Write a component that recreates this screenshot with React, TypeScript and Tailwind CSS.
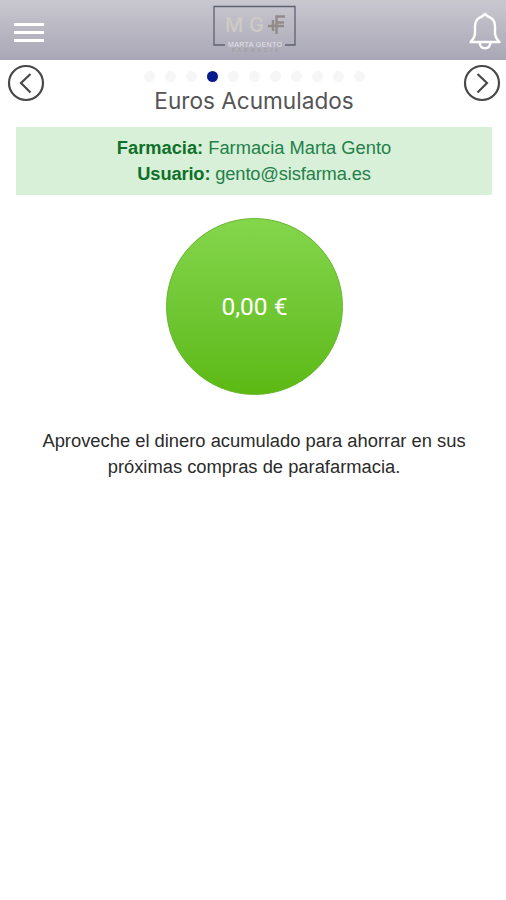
const PAGES = 11;
const CURRENT = 3;

function Logo() {
  return (
    <svg width="84" height="48" viewBox="0 0 84 48" className="ml-[3px] mt-[5px]">
      <path d="M12 40H1V1.500H82V40H72" fill="none" stroke="#5e6270" strokeWidth="1.300" />
      <text x="12" y="27" fontSize="20" fontWeight="500" textLength="39" fill="#cfcac5" className="font-['Inter',sans-serif]">MG</text>
      <path d="M63.500 29V11.500H72M63.500 17.500H71M55 21H71M60 15v11" fill="none" stroke="#928a88" strokeWidth="2.400" />
      <text x="15" y="41.500" fontSize="7" textLength="54" fill="#e4e3e9" className="font-['Liberation_Sans',sans-serif]">MARTA GENTO</text>
      <text x="19" y="47" fontSize="5" textLength="46" fill="#9e9997" className="font-['Liberation_Sans',sans-serif]">FARMACIA</text>
    </svg>
  );
}

function Header() {
  return (
    <header className="flex h-[60px] items-start justify-between bg-linear-to-b from-[#c9c8cf] to-[#a9a7b6] pl-[14px] pr-[4px]">
      <button aria-label="Menú" className="mt-[23px] flex w-[48px] flex-col gap-[5px]">
        <span className="h-[3px] w-[30px] bg-white" />
        <span className="h-[3px] w-[30px] bg-white" />
        <span className="h-[3px] w-[30px] bg-white" />
      </button>
      <Logo />
      <button aria-label="Avisos" className="mt-[11px] flex w-[58px] justify-end">
        <svg width="34" height="40" viewBox="0 0 34 40" fill="none" stroke="white" strokeWidth="2.400" strokeLinejoin="round">
          <path d="M17 3 14 5.500C9.500 7 7 10.500 7 15v7c0 4-1.500 6-4.500 9h29C28.500 28 27 26 27 22v-7c0-4.500-2.500-8-7-9.500z" />
          <path d="M11.500 31c.3 4 2.500 6.300 5.500 6.300s5.200-2.300 5.500-6.300" />
        </svg>
      </button>
    </header>
  );
}

function Arrow({ label, d }: { label: string; d: string }) {
  return (
    <button aria-label={label} className="mt-[3.500px] h-[38px] w-[38px]">
      <svg width="38" height="38" viewBox="0 0 38 38" fill="none" stroke="#484848" strokeWidth="2.200">
        <circle cx="19" cy="19" r="17" />
        <path d={d} />
      </svg>
    </button>
  );
}

export default function App() {
  return (
    <div className="min-h-[900px] w-[506px] bg-white font-['Liberation_Sans',Arial,sans-serif]">
      <Header />
      <div className="flex h-[67px] items-start justify-between pl-[7px] pr-[5px]">
        <Arrow label="Anterior" d="M23.500 10 14 19 23.500 28.500" />
        <div className="flex flex-col items-center pt-[10.500px]">
          <div className="flex gap-[10px]">
            {Array.from({ length: PAGES }, (_, i) => (
              <span key={i} className={`h-[11px] w-[11px] rounded-full ${i === CURRENT ? "bg-[#071b8c]" : "bg-[#f6f6f6]"}`} />
            ))}
          </div>
          <h1 className="mt-[4px] whitespace-nowrap font-['Inter',sans-serif] text-[22.600px] leading-[30px] text-[#555]">Euros Acumulados</h1>
        </div>
        <Arrow label="Siguiente" d="M14.500 10 24 19 14.500 28.500" />
      </div>
      <div className="ml-[16px] mr-[14px] h-[68px] bg-[#d8f0d8] pt-[8px] text-center text-[18.300px] leading-[26px] text-[#23804a]">
        <p><b className="text-[#0f7029]">Farmacia:</b> Farmacia Marta Gento</p>
        <p className="tracking-[-0.14px]"><b className="text-[#0f7029]">Usuario:</b> gento@sisfarma.es</p>
      </div>
      <div className="ml-[166px] mt-[23px] flex h-[177px] w-[177px] items-center justify-center rounded-full border border-[#65b52b] bg-linear-to-b from-[#84d64b] to-[#5cb911]">
        <span className="pt-[2px] font-['Roboto',sans-serif] text-[24.500px] text-white">0,00 €</span>
      </div>
      <p className="mt-[33px] pl-[2px] text-center text-[18.350px] leading-[26px] text-[#2b2b2b]">
        Aproveche el dinero acumulado para ahorrar en sus<br />próximas compras de parafarmacia.
      </p>
    </div>
  );
}
